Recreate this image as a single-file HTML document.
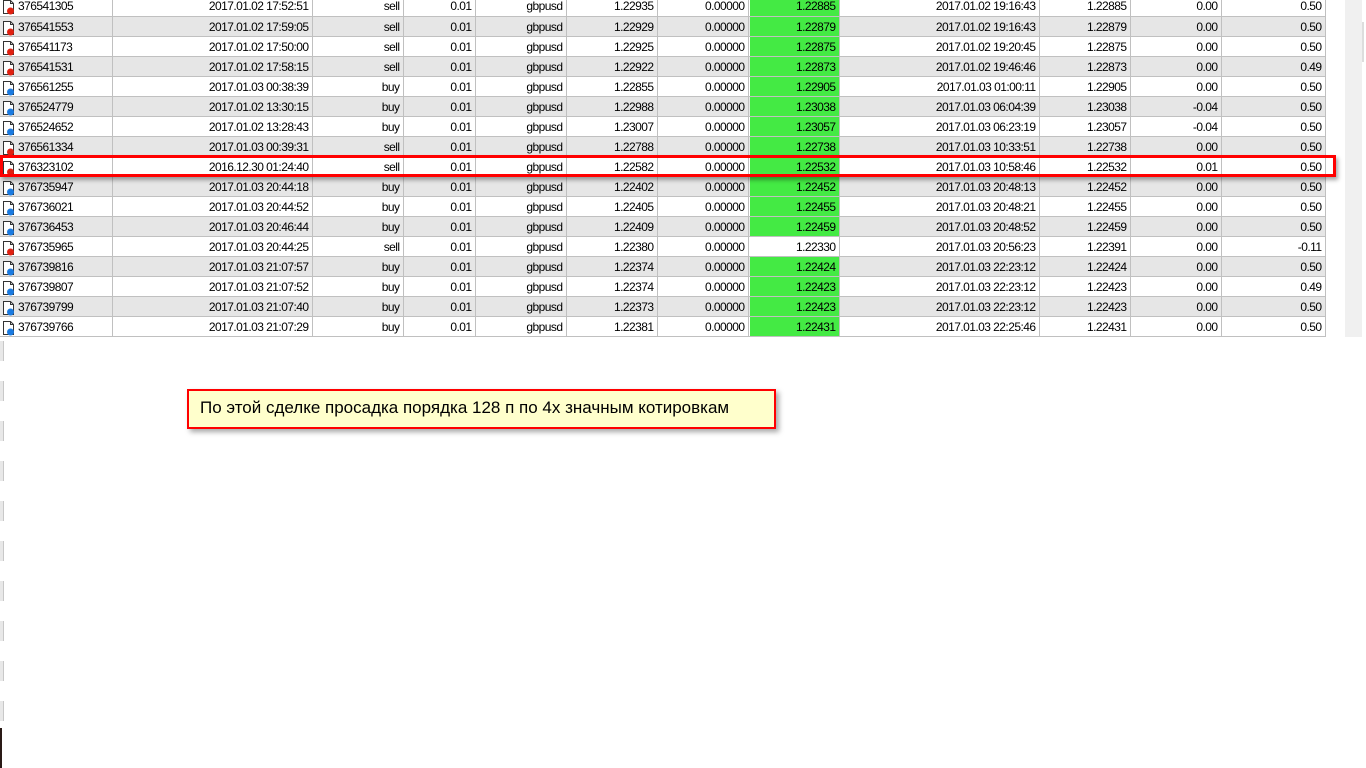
<!DOCTYPE html>
<html><head><meta charset="utf-8"><style>
body{margin:0;width:1366px;height:768px;overflow:hidden;background:#fff;position:relative;font-family:"Liberation Sans",Tahoma,sans-serif;font-size:12px;color:#000}
table{position:absolute;left:0;top:-4px;border-collapse:collapse;table-layout:fixed;width:1325px}
td{height:18px;padding:1px 3px 0 0;border-right:1px solid #c0c0c0;border-bottom:1px solid #c0c0c0;text-align:right;white-space:nowrap;overflow:hidden;line-height:18px;letter-spacing:-0.55px;box-sizing:content-box}
tr{height:20px}
tr:nth-child(even) td{background:#e6e6e6}
td.id{text-align:left;padding-left:0;position:relative}
td.id span{position:absolute;left:18px;top:1px}
td.id svg{position:absolute;left:1px;top:3px}
td.g{background:#44ea44!important;box-shadow:inset 1px 0 0 #fff}
tr:nth-child(even) td.g{box-shadow:inset 1px 0 0 #e6e6e6}
.sb{position:absolute;left:1345px;top:0;width:17px;height:337px;background:#f0f0f0}
.sb i{position:absolute;left:17px;top:22px;width:2px;height:40px;background:#ddd}
.tick{position:absolute;left:0;width:3px;height:20px;background:#e8e8e8;border-right:1px solid #c8c8c8}
.hl{position:absolute;left:0;top:155px;width:1330px;height:16px;border:3px solid #f00;box-shadow:2px 3px 4px rgba(0,0,0,.35)}
.note{position:absolute;left:187px;top:389px;width:574px;height:36px;background:#ffffcc;border:2px solid #f00;box-shadow:3px 3px 5px rgba(0,0,0,.35);font-size:17px;line-height:34px;padding-left:11px;box-sizing:content-box}
</style></head><body>
<svg width="0" height="0" style="position:absolute"><defs>
<g id="doc"><path d="M2.5 1.5h7l3 3v10h-10z" fill="#fff" stroke="#333"/><path d="M9.5 1.5v3h3" fill="none" stroke="#333"/></g>
</defs></svg>
<table>
<colgroup><col style="width:112px"><col style="width:200px"><col style="width:91px"><col style="width:72px"><col style="width:91px"><col style="width:91px"><col style="width:91px"><col style="width:91px"><col style="width:200px"><col style="width:91px"><col style="width:91px"><col style="width:104px"></colgroup>
<tr><td class="id"><svg width="14" height="16"><use href="#doc"/><circle cx="9.5" cy="12" r="3.5" fill="#e02010"/></svg><span>376541305</span></td><td>2017.01.02 17:52:51</td><td>sell</td><td>0.01</td><td>gbpusd</td><td>1.22935</td><td>0.00000</td><td class="g">1.22885</td><td>2017.01.02 19:16:43</td><td>1.22885</td><td>0.00</td><td>0.50</td></tr>
<tr><td class="id"><svg width="14" height="16"><use href="#doc"/><circle cx="9.5" cy="12" r="3.5" fill="#e02010"/></svg><span>376541553</span></td><td>2017.01.02 17:59:05</td><td>sell</td><td>0.01</td><td>gbpusd</td><td>1.22929</td><td>0.00000</td><td class="g">1.22879</td><td>2017.01.02 19:16:43</td><td>1.22879</td><td>0.00</td><td>0.50</td></tr>
<tr><td class="id"><svg width="14" height="16"><use href="#doc"/><circle cx="9.5" cy="12" r="3.5" fill="#e02010"/></svg><span>376541173</span></td><td>2017.01.02 17:50:00</td><td>sell</td><td>0.01</td><td>gbpusd</td><td>1.22925</td><td>0.00000</td><td class="g">1.22875</td><td>2017.01.02 19:20:45</td><td>1.22875</td><td>0.00</td><td>0.50</td></tr>
<tr><td class="id"><svg width="14" height="16"><use href="#doc"/><circle cx="9.5" cy="12" r="3.5" fill="#e02010"/></svg><span>376541531</span></td><td>2017.01.02 17:58:15</td><td>sell</td><td>0.01</td><td>gbpusd</td><td>1.22922</td><td>0.00000</td><td class="g">1.22873</td><td>2017.01.02 19:46:46</td><td>1.22873</td><td>0.00</td><td>0.49</td></tr>
<tr><td class="id"><svg width="14" height="16"><use href="#doc"/><circle cx="9.5" cy="12" r="3.5" fill="#1a7ae0"/></svg><span>376561255</span></td><td>2017.01.03 00:38:39</td><td>buy</td><td>0.01</td><td>gbpusd</td><td>1.22855</td><td>0.00000</td><td class="g">1.22905</td><td>2017.01.03 01:00:11</td><td>1.22905</td><td>0.00</td><td>0.50</td></tr>
<tr><td class="id"><svg width="14" height="16"><use href="#doc"/><circle cx="9.5" cy="12" r="3.5" fill="#1a7ae0"/></svg><span>376524779</span></td><td>2017.01.02 13:30:15</td><td>buy</td><td>0.01</td><td>gbpusd</td><td>1.22988</td><td>0.00000</td><td class="g">1.23038</td><td>2017.01.03 06:04:39</td><td>1.23038</td><td>-0.04</td><td>0.50</td></tr>
<tr><td class="id"><svg width="14" height="16"><use href="#doc"/><circle cx="9.5" cy="12" r="3.5" fill="#1a7ae0"/></svg><span>376524652</span></td><td>2017.01.02 13:28:43</td><td>buy</td><td>0.01</td><td>gbpusd</td><td>1.23007</td><td>0.00000</td><td class="g">1.23057</td><td>2017.01.03 06:23:19</td><td>1.23057</td><td>-0.04</td><td>0.50</td></tr>
<tr><td class="id"><svg width="14" height="16"><use href="#doc"/><circle cx="9.5" cy="12" r="3.5" fill="#e02010"/></svg><span>376561334</span></td><td>2017.01.03 00:39:31</td><td>sell</td><td>0.01</td><td>gbpusd</td><td>1.22788</td><td>0.00000</td><td class="g">1.22738</td><td>2017.01.03 10:33:51</td><td>1.22738</td><td>0.00</td><td>0.50</td></tr>
<tr><td class="id"><svg width="14" height="16"><use href="#doc"/><circle cx="9.5" cy="12" r="3.5" fill="#e02010"/></svg><span>376323102</span></td><td>2016.12.30 01:24:40</td><td>sell</td><td>0.01</td><td>gbpusd</td><td>1.22582</td><td>0.00000</td><td class="g">1.22532</td><td>2017.01.03 10:58:46</td><td>1.22532</td><td>0.01</td><td>0.50</td></tr>
<tr><td class="id"><svg width="14" height="16"><use href="#doc"/><circle cx="9.5" cy="12" r="3.5" fill="#1a7ae0"/></svg><span>376735947</span></td><td>2017.01.03 20:44:18</td><td>buy</td><td>0.01</td><td>gbpusd</td><td>1.22402</td><td>0.00000</td><td class="g">1.22452</td><td>2017.01.03 20:48:13</td><td>1.22452</td><td>0.00</td><td>0.50</td></tr>
<tr><td class="id"><svg width="14" height="16"><use href="#doc"/><circle cx="9.5" cy="12" r="3.5" fill="#1a7ae0"/></svg><span>376736021</span></td><td>2017.01.03 20:44:52</td><td>buy</td><td>0.01</td><td>gbpusd</td><td>1.22405</td><td>0.00000</td><td class="g">1.22455</td><td>2017.01.03 20:48:21</td><td>1.22455</td><td>0.00</td><td>0.50</td></tr>
<tr><td class="id"><svg width="14" height="16"><use href="#doc"/><circle cx="9.5" cy="12" r="3.5" fill="#1a7ae0"/></svg><span>376736453</span></td><td>2017.01.03 20:46:44</td><td>buy</td><td>0.01</td><td>gbpusd</td><td>1.22409</td><td>0.00000</td><td class="g">1.22459</td><td>2017.01.03 20:48:52</td><td>1.22459</td><td>0.00</td><td>0.50</td></tr>
<tr><td class="id"><svg width="14" height="16"><use href="#doc"/><circle cx="9.5" cy="12" r="3.5" fill="#e02010"/></svg><span>376735965</span></td><td>2017.01.03 20:44:25</td><td>sell</td><td>0.01</td><td>gbpusd</td><td>1.22380</td><td>0.00000</td><td>1.22330</td><td>2017.01.03 20:56:23</td><td>1.22391</td><td>0.00</td><td>-0.11</td></tr>
<tr><td class="id"><svg width="14" height="16"><use href="#doc"/><circle cx="9.5" cy="12" r="3.5" fill="#1a7ae0"/></svg><span>376739816</span></td><td>2017.01.03 21:07:57</td><td>buy</td><td>0.01</td><td>gbpusd</td><td>1.22374</td><td>0.00000</td><td class="g">1.22424</td><td>2017.01.03 22:23:12</td><td>1.22424</td><td>0.00</td><td>0.50</td></tr>
<tr><td class="id"><svg width="14" height="16"><use href="#doc"/><circle cx="9.5" cy="12" r="3.5" fill="#1a7ae0"/></svg><span>376739807</span></td><td>2017.01.03 21:07:52</td><td>buy</td><td>0.01</td><td>gbpusd</td><td>1.22374</td><td>0.00000</td><td class="g">1.22423</td><td>2017.01.03 22:23:12</td><td>1.22423</td><td>0.00</td><td>0.49</td></tr>
<tr><td class="id"><svg width="14" height="16"><use href="#doc"/><circle cx="9.5" cy="12" r="3.5" fill="#1a7ae0"/></svg><span>376739799</span></td><td>2017.01.03 21:07:40</td><td>buy</td><td>0.01</td><td>gbpusd</td><td>1.22373</td><td>0.00000</td><td class="g">1.22423</td><td>2017.01.03 22:23:12</td><td>1.22423</td><td>0.00</td><td>0.50</td></tr>
<tr><td class="id"><svg width="14" height="16"><use href="#doc"/><circle cx="9.5" cy="12" r="3.5" fill="#1a7ae0"/></svg><span>376739766</span></td><td>2017.01.03 21:07:29</td><td>buy</td><td>0.01</td><td>gbpusd</td><td>1.22381</td><td>0.00000</td><td class="g">1.22431</td><td>2017.01.03 22:25:46</td><td>1.22431</td><td>0.00</td><td>0.50</td></tr>
</table>
<div class="sb"><i></i></div>
<div class="tick" style="top:341px"></div><div class="tick" style="top:381px"></div><div class="tick" style="top:421px"></div><div class="tick" style="top:461px"></div><div class="tick" style="top:501px"></div><div class="tick" style="top:541px"></div><div class="tick" style="top:581px"></div><div class="tick" style="top:621px"></div><div class="tick" style="top:661px"></div><div class="tick" style="top:701px"></div>
<div style="position:absolute;left:0;top:728px;width:2px;height:40px;background:#2a1a16"></div>
<div class="hl"></div>
<div class="note">По этой сделке просадка порядка 128 п по 4х значным котировкам</div>
</body></html>
